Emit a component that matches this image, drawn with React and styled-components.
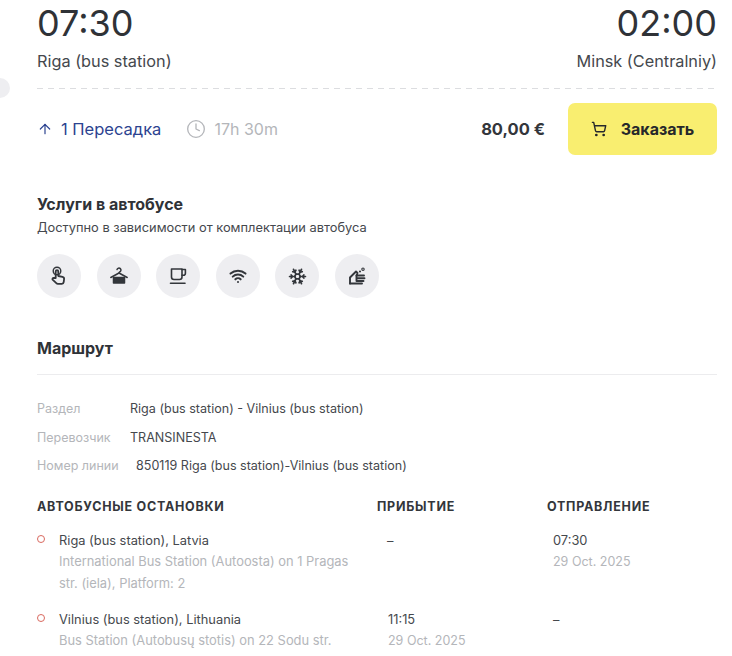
import React from 'react'
import styled, { createGlobalStyle } from 'styled-components'
import { ArrowUp, Clock, ShoppingCart, Wifi, Snowflake } from 'lucide-react'

const GlobalStyle = createGlobalStyle`
  html, body {
    margin: 0;
    background: #ffffff;
    height: 656px;
    overflow: hidden;
  }
  body {
    font-family: "Inter", "Liberation Sans", sans-serif;
    color: #33363b;
  }
`

const Page = styled.div`
  position: relative;
  width: 732px;
  height: 656px;
  box-sizing: border-box;
  padding: 0 15px 0 37px;
  overflow: hidden;
`

const Notch = styled.div`
  position: absolute;
  left: -10px;
  top: 78px;
  width: 20px;
  height: 20px;
  border-radius: 50%;
  background: #eeeef1;
`

const Times = styled.div`
  display: flex;
  justify-content: space-between;
  height: 88px;
`

const DashedLine = styled.div`
  height: 1px;
  background: repeating-linear-gradient(90deg, #dcdde0 0 6px, transparent 6px 11px);
`

const Terminal = styled.div`
  display: flex;
  flex-direction: column;
  align-items: ${p => (p.$end ? 'flex-end' : 'flex-start')};
`

const Time = styled.div`
  font-size: 36px;
  line-height: 46px;
  color: #2f3237;
`

const Place = styled.div`
  font-size: 16.3px;
  line-height: 24px;
  margin-top: 3px;
  color: #45484d;
`

const Summary = styled.div`
  display: flex;
  align-items: center;
  margin-top: 14px;
  height: 52px;
`

const Transfer = styled.div`
  display: flex;
  align-items: center;
  gap: 8px;
  font-size: 16.5px;
  color: #2c4390;
`

const Duration = styled.div`
  display: flex;
  align-items: center;
  gap: 8px;
  margin-left: 25px;
  font-size: 16px;
  color: #b4b6ba;
`

const Price = styled.div`
  margin-left: auto;
  font-size: 16.5px;
  font-weight: 700;
  color: #33363b;
`

const OrderButton = styled.button`
  display: flex;
  align-items: center;
  justify-content: center;
  gap: 14px;
  width: 149px;
  height: 52px;
  margin-left: 23px;
  border: 0;
  border-radius: 7px;
  background: #f9ee70;
  font-family: inherit;
  font-size: 16px;
  font-weight: 700;
  color: #26282b;
`

const SectionTitle = styled.h2`
  margin: 0;
  font-size: 16px;
  line-height: 20px;
  font-weight: 700;
  color: #2f3237;
`

const Services = styled.section`
  margin-top: 39px;
`

const ServicesNote = styled.p`
  margin: 5px 0 0;
  font-size: 12.85px;
  line-height: 18px;
  color: #45484d;
`

const ServiceIcons = styled.div`
  display: flex;
  gap: 15.5px;
  margin-top: 17px;
`

const ServiceIcon = styled.div`
  display: flex;
  align-items: center;
  justify-content: center;
  width: 44px;
  height: 44px;
  border-radius: 50%;
  background: #eeeef1;
  color: #33363b;
`

const Route = styled.section`
  margin-top: 40px;
`

const RouteHead = styled.div`
  padding-bottom: 16px;
  border-bottom: 1px solid #ececee;
`

const Details = styled.div`
  display: flex;
  flex-direction: column;
  gap: 9.5px;
  margin-top: 24px;
`

const DetailRow = styled.div`
  display: flex;
  font-size: 12.55px;
  line-height: 19px;
  color: #45484d;
`

const DetailLabel = styled.span`
  width: ${p => (p.$wide ? '99px' : '93px')};
  font-size: 12.5px;
  color: #b4b6ba;
`

const Stops = styled.div`
  display: grid;
  grid-template-columns: 340px 170px 1fr;
  margin-top: 23px;
`

const HeadCell = styled.div`
  font-size: 12.5px;
  line-height: 18px;
  font-weight: 700;
  letter-spacing: 0.75px;
  text-transform: uppercase;
  color: #33363b;
  margin-bottom: 14px;
`

const StopCell = styled.div`
  position: relative;
  padding-left: 22px;
  padding-right: 20px;
  margin-bottom: 15px;
`

const TimeCell = styled.div`
  padding-left: ${p => (p.$pad ? p.$pad : 6)}px;
  margin-bottom: 15px;
`

const Marker = styled.span`
  position: absolute;
  left: 0;
  top: 5px;
  box-sizing: border-box;
  width: 8px;
  height: 8px;
  border: 1.3px solid #d9695f;
  border-radius: 50%;
`

const Main = styled.div`
  font-size: 12.85px;
  line-height: 21px;
  color: #45484d;
`

const Sub = styled.div`
  font-size: ${p => (p.$date ? '12.5px' : '12.9px')};
  line-height: 21.5px;
  color: #b4b6ba;
`

const HandIcon = () => (
  <svg width="20" height="20" viewBox="0 0 20 20" fill="none" stroke="currentColor" strokeWidth="1.8" strokeLinecap="round" strokeLinejoin="round">
    <circle cx="8" cy="5" r="3.8" strokeWidth="1.4" />
    <path d="M6.7 12V5.4a1.3 1.3 0 0 1 2.6 0V10l4.2.9c1 .2 1.700 1.100 1.600 2.100l-.4 3.200c-.1.900-.9 1.600-1.800 1.600H8.800c-.6 0-1.100-.3-1.500-.7L3.600 13.600c-.5-.6.1-1.800 1.200-1.600z" />
  </svg>
)

const HangerIcon = () => (
  <svg width="20" height="20" viewBox="0 0 20 20" fill="none" stroke="currentColor" strokeWidth="1.5" strokeLinecap="round" strokeLinejoin="round">
    <path d="M8 3.600A2 2 0 1 1 10.500 6L10 7" />
    <path d="M1.800 11.500 10 7l8.200 4.500" />
    <path d="M4.500 11.500h11V17h-11z" fill="currentColor" />
  </svg>
)

const CupIcon = () => (
  <svg width="20" height="20" viewBox="0 0 20 20" fill="none" stroke="currentColor" strokeWidth="1.6" strokeLinecap="round" strokeLinejoin="round">
    <path d="M3.500 3h10.500v8a2.500 2.500 0 0 1-2.500 2.500H6A2.500 2.500 0 0 1 3.500 11z" />
    <path d="M14 3.500h3.400v3.800a2 2 0 0 1-2 2H14" />
    <path d="M2.500 17.300h14.500" />
  </svg>
)

const WashIcon = () => (
  <svg width="20" height="20" viewBox="0 0 20 20" fill="none" stroke="currentColor" strokeWidth="1.9" strokeLinecap="round" strokeLinejoin="round">
    <path d="M3 17.500V11.500L9 5.500l1.500 1.500L9.500 9.500H17" />
    <path d="M9.500 9.500V12.300H17.500M9.500 12.300V15H16.500" />
    <path d="M3 17.500H15" />
    <circle cx="16" cy="3.200" r="1.200" strokeWidth="1.100" />
    <circle cx="13" cy="5.500" r="0.500" strokeWidth="1.100" />
  </svg>
)

export default function App() {
  return (
    <Page>
      <GlobalStyle />
      <Notch />
      <Times>
        <Terminal>
          <Time>07:30</Time>
          <Place>Riga (bus station)</Place>
        </Terminal>
        <Terminal $end>
          <Time>02:00</Time>
          <Place>Minsk (Centralniy)</Place>
        </Terminal>
      </Times>
      <DashedLine />

      <Summary>
        <Transfer>
          <ArrowUp size={16} strokeWidth={1.8} />
          1 Пересадка
        </Transfer>
        <Duration>
          <Clock size={20} strokeWidth={1.6} />
          17h 30m
        </Duration>
        <Price>80,00 €</Price>
        <OrderButton>
          <ShoppingCart size={16} strokeWidth={2.1} />
          Заказать
        </OrderButton>
      </Summary>

      <Services>
        <SectionTitle>Услуги в автобусе</SectionTitle>
        <ServicesNote>Доступно в зависимости от комплектации автобуса</ServicesNote>
        <ServiceIcons>
          <ServiceIcon><HandIcon /></ServiceIcon>
          <ServiceIcon><HangerIcon /></ServiceIcon>
          <ServiceIcon><CupIcon /></ServiceIcon>
          <ServiceIcon><Wifi size={18} strokeWidth={2.7} /></ServiceIcon>
          <ServiceIcon><Snowflake size={19} strokeWidth={2.2} /></ServiceIcon>
          <ServiceIcon><WashIcon /></ServiceIcon>
        </ServiceIcons>
      </Services>

      <Route>
        <RouteHead>
          <SectionTitle>Маршрут</SectionTitle>
        </RouteHead>
        <Details>
          <DetailRow><DetailLabel>Раздел</DetailLabel>Riga (bus station) - Vilnius (bus station)</DetailRow>
          <DetailRow><DetailLabel>Перевозчик</DetailLabel>TRANSINESTA</DetailRow>
          <DetailRow><DetailLabel $wide>Номер линии</DetailLabel>850119 Riga (bus station)-Vilnius (bus station)</DetailRow>
        </Details>

        <Stops>
          <HeadCell>Автобусные остановки</HeadCell>
          <HeadCell>Прибытие</HeadCell>
          <HeadCell>Отправление</HeadCell>

          <StopCell>
            <Marker />
            <Main>Riga (bus station), Latvia</Main>
            <Sub>International Bus Station (Autoosta) on 1 Pragas str. (iela), Platform: 2</Sub>
          </StopCell>
          <TimeCell $pad={10}><Main>–</Main></TimeCell>
          <TimeCell><Main>07:30</Main><Sub $date>29 Oct. 2025</Sub></TimeCell>

          <StopCell>
            <Marker />
            <Main>Vilnius (bus station), Lithuania</Main>
            <Sub>Bus Station (Autobusų stotis) on 22 Sodu str.</Sub>
          </StopCell>
          <TimeCell $pad={11}><Main>11:15</Main><Sub $date>29 Oct. 2025</Sub></TimeCell>
          <TimeCell><Main>–</Main></TimeCell>
        </Stops>
      </Route>
    </Page>
  )
}
